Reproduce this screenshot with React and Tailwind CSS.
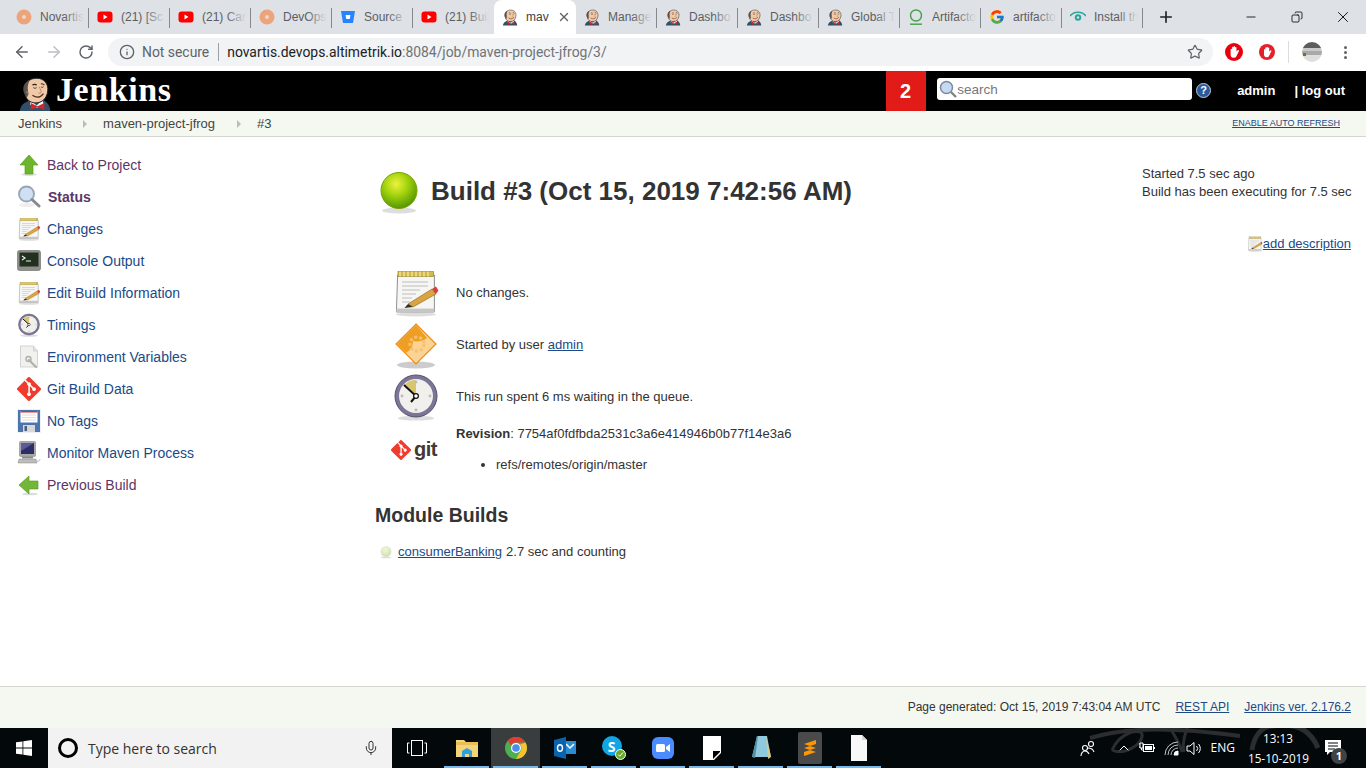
import { ArrowLeft, ArrowRight, RotateCw, Info, Star, Plus, Minus, X, Mic, ChevronUp, Copy } from 'lucide-react';
import { FcGoogle } from 'react-icons/fc';

const GIT_PATH = 'M90.156 41.965 50.036 1.848a5.918 5.918 0 0 0-8.372 0l-8.328 8.332 10.566 10.566a7.03 7.03 0 0 1 7.23 1.684 7.034 7.034 0 0 1 1.669 7.277l10.187 10.184a7.028 7.028 0 0 1 7.278 1.672 7.04 7.04 0 0 1 0 9.957 7.05 7.05 0 0 1-9.965 0 7.044 7.044 0 0 1-1.528-7.66l-9.5-9.497V59.36a7.04 7.04 0 0 1 1.86 11.29 7.04 7.04 0 0 1-9.957 0 7.04 7.04 0 0 1 0-9.958 7.06 7.06 0 0 1 2.304-1.539V33.926a7.049 7.049 0 0 1-3.82-9.234L29.242 14.272 1.73 41.777a5.925 5.925 0 0 0 0 8.371L41.852 90.27a5.925 5.925 0 0 0 8.37 0l39.934-39.934a5.925 5.925 0 0 0 0-8.371';

function JenkinsHead({ size = 16 }) {
    return (
        <svg width={size} height={size * 1.1} viewBox="0 0 40 44">
            <path d="M2 44C3 36 8 33 15 31l14-1c5 3 9 7 9 14z" fill="#2f5068" />
            <path d="M15 31l7 6 7-7 1 6-8 4-8-4z" fill="#f4f4f4" />
            <path d="M15 34l8 4 8-4v8l-8-3-8 3z" fill="#d3262a" />
            <path d="M8 22C6 10 14 5 22 5c9 0 14 7 13 15-1 9-7 14-14 14S9 30 8 22z" fill="#f0c9a8" stroke="#1c1c1c" strokeWidth="1.1" />
            <path d="M8 24C4 17 7 9 14 7c-3 5-3 10-2 15 0 3-1 5-2 6z" fill="#55524e" />
            <path d="M11 19c-2 0-2 4 1 5z" fill="#e4b693" stroke="#3a2a22" strokeWidth="0.6" />
            <path d="M17 13c1-1 4-1 5 0M27 12c1-1 3 0 4 1" stroke="#2c211b" strokeWidth="1.3" fill="none" />
            <path d="M18 16c1 1 3 1 4 0M27 15c1 1 2 1 3 0" stroke="#2c211b" strokeWidth="0.9" fill="none" />
            <path d="M25 15c1 3 3 5 2 7-1 1-3 1-3 0" stroke="#a8795a" strokeWidth="0.9" fill="none" />
            <path d="M17 25c4 3 9 3 13-2" stroke="#5a2c22" strokeWidth="1.4" fill="none" />
        </svg>
    );
}

function OrangeDot() {
    return (
        <svg width="16" height="16" viewBox="0 0 16 16">
            <circle cx="8" cy="8" r="7.5" fill="#eba47c" />
            <circle cx="8" cy="8" r="2" fill="#f6d3bd" />
        </svg>
    );
}

function YouTube() {
    return (
        <svg width="16" height="16" viewBox="0 0 16 16">
            <rect x="0.5" y="2.5" width="15" height="11" rx="3" fill="#f00" />
            <path d="M6.5 5.5l4 2.5-4 2.5z" fill="#fff" />
        </svg>
    );
}

function Bitbucket() {
    return (
        <svg width="16" height="16" viewBox="0 0 16 16">
            <path d="M1 2h14l-2 12H3z" fill="#2684ff" />
            <path d="M5.6 6h4.8l-.6 4H6.2z" fill="#fff" />
        </svg>
    );
}

function ArtifactoryIcon() {
    return (
        <svg width="16" height="18" viewBox="0 0 16 18">
            <circle cx="8" cy="7.5" r="5.5" fill="none" stroke="#43a047" strokeWidth="1.4" />
            <rect x="2" y="15.5" width="12" height="1.4" fill="#43a047" />
        </svg>
    );
}

function EyeIcon() {
    return (
        <svg width="16" height="16" viewBox="0 0 16 16">
            <path d="M0 7c4-5 12-5 16 0" fill="none" stroke="#26a69a" strokeWidth="1.5" />
            <circle cx="8" cy="8.5" r="3.2" fill="#26a69a" />
            <circle cx="8" cy="8.5" r="1.2" fill="#dee1e6" />
        </svg>
    );
}

const tabs = [
    { icon: <OrangeDot />, title: 'Novartis' },
    { icon: <YouTube />, title: '(21) [Sc' },
    { icon: <YouTube />, title: '(21) Car' },
    { icon: <OrangeDot />, title: 'DevOps' },
    { icon: <Bitbucket />, title: 'Source' },
    { icon: <YouTube />, title: '(21) Buil' },
    { icon: <JenkinsHead />, title: 'mav', active: true },
    { icon: <JenkinsHead />, title: 'Manage' },
    { icon: <JenkinsHead />, title: 'Dashbo' },
    { icon: <JenkinsHead />, title: 'Dashbo' },
    { icon: <JenkinsHead />, title: 'Global T' },
    { icon: <ArtifactoryIcon />, title: 'Artifacto' },
    { icon: <FcGoogle size={16} />, title: 'artifacto' },
    { icon: <EyeIcon />, title: 'Install th' },
];

function TabBar() {
    return (
        <div className="h-[34px] bg-[#dee1e6] flex items-end pl-2 shrink-0">
            {tabs.map((t, i) => (
                t.active ? (
                    <div key={i} className="w-[82px] h-[34px] bg-white rounded-t-lg flex items-center pl-2 pr-2 gap-2">
                        <span className="shrink-0 w-4 flex justify-center">{t.icon}</span>
                        <span className="text-xs text-[#3c4043] whitespace-nowrap">{t.title}</span>
                        <X size={14} strokeWidth={2.4} className="text-[#5f6368] ml-auto shrink-0" />
                    </div>
                ) : (
                    <div key={i} className="w-[81px] h-[34px] flex items-center pl-2 pr-[5px] gap-2 relative">
                        <span className="shrink-0 w-4 flex justify-center">{t.icon}</span>
                        <span className="text-xs text-[#5a5e63] whitespace-nowrap overflow-hidden flex-1">{t.title}</span>
                        <span className="absolute right-[5px] top-2 w-5 h-[18px] bg-gradient-to-r from-transparent to-[#dee1e6]" />
                        {i !== 5 && <span className="w-px h-5 bg-[#85888c] absolute right-0 top-2" />}
                    </div>
                )
            ))}
            <div className="w-[46px] h-[34px] flex items-center justify-center">
                <Plus size={18} strokeWidth={2.2} className="text-[#202124]" />
            </div>
            <div className="flex-1" />
            <div className="w-[46px] h-[34px] flex items-center justify-center"><Minus size={14} strokeWidth={1.4} className="text-black" /></div>
            <div className="w-[46px] h-[34px] flex items-center justify-center"><Copy size={12} strokeWidth={1.6} className="text-black -scale-x-100" /></div>
            <div className="w-[46px] h-[34px] flex items-center justify-center"><X size={18} strokeWidth={1.2} className="text-black" /></div>
        </div>
    );
}

// red blocker badge: ring, white hand with four fingers
function StopIcon({ size, ring }) {
    return (
        <svg width={size} height={size} viewBox="0 0 16 16">
            <circle cx="8" cy="8" r="8" fill={ring} />
            <path d="M5 8V5.500a.7.7 0 0 1 1.300 0V3.700a.7.7 0 0 1 1.300 0V3.200a.7.7 0 0 1 1.300 0v.8a.7.7 0 0 1 1.300 0v3.500l1-1a.7.7 0 0 1 1 1L9.800 12.500c-.4.500-1 .7-1.600.7H7.500C6 13.200 5 12 5 10.500z" fill="#fff" />
        </svg>
    );
}

function Avatar() {
    return (
        <svg width="20" height="20" viewBox="0 0 20 20">
            <clipPath id="avatarClip"><circle cx="10" cy="10" r="10" /></clipPath>
            <g clipPath="url(#avatarClip)">
                <rect width="20" height="6" fill="#5c5c5c" />
                <rect y="6" width="20" height="3" fill="#c9c9c9" />
                <rect y="9" width="20" height="4" fill="#a9a9a9" />
                <rect y="13" width="20" height="7" fill="#dedede" />
                <rect x="1" y="11" width="3" height="3" fill="#4d8a22" />
            </g>
        </svg>
    );
}

function Toolbar() {
    return (
        <div className="h-[36px] bg-white flex items-center shrink-0 font-['Roboto',sans-serif]">
            <div className="w-[44px] flex justify-center"><ArrowLeft size={18} strokeWidth={2} className="text-[#5f6368]" /></div>
            <div className="w-[20px] flex justify-center"><ArrowRight size={18} strokeWidth={2} className="text-[#bcbfc3]" /></div>
            <div className="w-[44px] flex justify-center"><RotateCw size={16} strokeWidth={2.2} className="text-[#5f6368]" /></div>
            <div className="w-[1105px] h-[28px] rounded-full bg-[#f1f3f4] flex items-center pl-[11px] pr-[10px]">
                <Info size={16} strokeWidth={2} className="text-[#5f6368]" />
                <span className="ml-[7px] text-[13.9px] text-[#5f6368]">Not secure</span>
                <span className="ml-[9px] w-px h-[18px] bg-[#9aa0a6]" />
                <span className="ml-[8px] text-[13.9px] text-[#202124] whitespace-nowrap">novartis.devops.altimetrik.io<span className="text-[#6f7377]">:8084/job/maven-project-jfrog/3/</span></span>
                <Star size={16} strokeWidth={1.8} className="text-[#5f6368] ml-auto" />
            </div>
            <div className="ml-[12px] w-[20px]"><StopIcon size={18} ring="#e8000f" /></div>
            <div className="ml-[14px] w-[16px]"><StopIcon size={16} ring="#e5202a" /></div>
            <div className="ml-[13px] w-px h-[22px] bg-[#dadce0]" />
            <div className="ml-[13px] w-5 h-5"><Avatar /></div>
            <div className="ml-[22px] flex flex-col gap-[2px]">
                <span className="w-[3px] h-[3px] rounded-full bg-[#5f6368]" />
                <span className="w-[3px] h-[3px] rounded-full bg-[#5f6368]" />
                <span className="w-[3px] h-[3px] rounded-full bg-[#5f6368]" />
            </div>
        </div>
    );
}

function MagnifierSmall() {
    return (
        <svg width="18" height="18" viewBox="0 0 18 18" className="shrink-0">
            <circle cx="7.5" cy="7.5" r="6" fill="#c5d9f1" stroke="#7c8aa0" strokeWidth="1.5" />
            <path d="M12 12l5 5" stroke="#7f7f7f" strokeWidth="2.2" />
        </svg>
    );
}

function JenkinsHeader() {
    return (
        <div className="h-[40px] bg-black flex items-stretch shrink-0 font-['Liberation_Sans',sans-serif] mt-px">
            <div className="ml-[18px] w-[36px] overflow-hidden flex items-end"><JenkinsHead size={34} /></div>
            <span className="ml-[2px] font-['Liberation_Serif',serif] font-bold text-[34px] text-white leading-[38px] tracking-[0.6px]">Jenkins</span>
            <div className="ml-auto w-[40px] bg-[#e11b17] flex items-center justify-center text-white text-xl font-bold pr-px">2</div>
            <div className="ml-[11px] self-center w-[255px] h-[22px] mt-[-4px] bg-white rounded-[3px] flex items-center pl-[2px]">
                <MagnifierSmall />
                <span className="text-[13.5px] text-[#777] mt-[2px]">search</span>
            </div>
            <div className="ml-[4px] self-center w-[15px] h-[15px] mt-[-1px] rounded-full bg-[#2a5a9c] border border-[#bcd] flex items-center justify-center text-white text-[11px] font-bold">?</div>
            <span className="ml-[26px] self-center text-[13px] font-bold text-white">admin</span>
            <span className="ml-[19px] self-center text-[13px] font-bold text-white">| log out</span>
            <div className="w-[21px]" />
        </div>
    );
}

function Caret() {
    return <span className="block w-0 h-0 border-y-[4px] border-y-transparent border-l-[4px] border-l-[#bbb]" />;
}

function Breadcrumb() {
    return (
        <div className="h-[26px] bg-[#f5f8f0] border-b border-[#d3d7cf] flex items-center pl-[18px] pr-[26px] text-[13px] text-[#444] shrink-0">
            <span>Jenkins</span>
            <span className="ml-[21px] mr-[16px]"><Caret /></span>
            <span>maven-project-jfrog</span>
            <span className="ml-[22px] mr-[16px]"><Caret /></span>
            <span>#3</span>
            <a className="ml-auto text-[9px] text-[#204a87] underline">ENABLE AUTO REFRESH</a>
        </div>
    );
}

function UpArrow() {
    return (
        <svg width="24" height="24" viewBox="0 0 24 24">
            <ellipse cx="12" cy="21.5" rx="8" ry="1.5" fill="#ddd" />
            <path d="M12 2l9 10h-5v9H8v-9H3z" fill="#6cb52d" stroke="#4e9a06" strokeWidth="0.6" />
        </svg>
    );
}

function LeftArrow() {
    return (
        <svg width="24" height="24" viewBox="0 0 24 24">
            <ellipse cx="13" cy="21" rx="8" ry="1.3" fill="#ddd" />
            <path d="M2 12l10-9v5h9v8h-9v5z" fill="#74b53c" stroke="#4e9a06" strokeWidth="0.6" />
        </svg>
    );
}

function BigMagnifier() {
    return (
        <svg width="24" height="24" viewBox="0 0 24 24">
            <ellipse cx="10" cy="20" rx="8" ry="2" fill="#eee" />
            <circle cx="9.5" cy="9" r="7.5" fill="#cfe0f5" stroke="#98a4b3" strokeWidth="1.8" />
            <path d="M15 14.5l7 6.5" stroke="#868a8f" strokeWidth="3" strokeLinecap="round" />
        </svg>
    );
}

function Notepad({ size = 24 }) {
    return (
        <svg width={size} height={size} viewBox="0 0 24 24">
            <ellipse cx="12" cy="22.7" rx="10" ry="1" fill="#ddd" />
            <path d="M2.8 3h18.400v18.500H2.200z" fill="#f6f6f4" stroke="#8f8f8f" strokeWidth="0.5" />
            <rect x="2.2" y="19.8" width="19" height="1.7" fill="#c6c6c4" />
            <rect x="3" y="1.3" width="17.8" height="2.5" fill="#d2b94a" stroke="#8f7a1e" strokeWidth="0.3" />
            <path d="M4 1.300v2.500M6 1.300v2.500M8 1.300v2.500M10 1.300v2.500M12 1.300v2.500M14 1.300v2.500M16 1.300v2.500M18 1.300v2.500" stroke="#fff4c0" strokeWidth="0.5" />
            <path d="M5 6.500h13M5 8.500h13M5 10.500h9M5 12.500h7M5 14.500h5M5 16.500h4" stroke="#bdbdbd" strokeWidth="0.5" />
            <path d="M8 17.500l12-7.500 2 2.500-11.500 6.500z" fill="#d9a441" stroke="#8a6416" strokeWidth="0.3" />
            <path d="M20 10l2-1.200 1.200 2-1.200 1.700z" fill="#d6403b" />
            <path d="M8 17.500l-1.800 2 4.300-.5z" fill="#33302a" />
        </svg>
    );
}

function Terminal() {
    return (
        <svg width="24" height="24" viewBox="0 0 24 24">
            <rect x="0.5" y="1.5" width="23" height="20" rx="2" fill="#8e9089" stroke="#666" strokeWidth="0.6" />
            <rect x="2.5" y="3.5" width="19" height="14" fill="#22301f" />
            <path d="M5 7l3 2-3 2M9 12h5" stroke="#e9f2e4" strokeWidth="1.2" fill="none" />
        </svg>
    );
}

function Clock({ size = 24 }) {
    return (
        <svg width={size} height={size} viewBox="0 0 24 24">
            <ellipse cx="12" cy="22.6" rx="9" ry="1.2" fill="#ddd" />
            <circle cx="12" cy="11.5" r="10.5" fill="#7b7596" stroke="#57516f" strokeWidth="0.5" />
            <circle cx="12" cy="11.5" r="8.5" fill="#f1f0ec" />
            <path d="M12 11.500V3.500a8 8 0 0 0-6 2.700z" fill="#d8c56f" />
            <path d="M6 6l6 5.500-2.500 3" stroke="#111" strokeWidth="1" fill="none" />
            <circle cx="12" cy="11.5" r="1.2" fill="#fff" stroke="#111" strokeWidth="0.6" />
            <circle cx="12" cy="4.5" r="0.7" fill="#bbb" /><circle cx="19" cy="11.5" r="0.7" fill="#bbb" />
            <circle cx="12" cy="18.5" r="0.7" fill="#bbb" /><circle cx="5" cy="11.5" r="0.7" fill="#bbb" />
        </svg>
    );
}

function EnvDoc() {
    return (
        <svg width="24" height="24" viewBox="0 0 24 24">
            <path d="M3.500 1h13l4 5v16h-17z" fill="#f1f1ef" stroke="#c4c4c2" strokeWidth="0.7" />
            <path d="M16.500 1v5h4" fill="#e0e0de" stroke="#c4c4c2" strokeWidth="0.6" />
            <path d="M12 15l7 7" stroke="#b0b0ae" strokeWidth="2.2" strokeLinecap="round" />
            <circle cx="11.5" cy="14" r="2.5" fill="none" stroke="#b0b0ae" strokeWidth="1.4" />
        </svg>
    );
}

function GitLogo({ size = 24 }) {
    return (
        <svg width={size} height={size} viewBox="0 0 92 92" className="shrink-0">
            <path d={GIT_PATH} fill="#f03c2e" />
        </svg>
    );
}

function Floppy() {
    return (
        <svg width="24" height="24" viewBox="0 0 24 24">
            <rect x="0" y="0" width="24" height="24" fill="#eef0f3" />
            <rect x="1" y="1" width="22" height="22" fill="#4d75ad" />
            <rect x="3.5" y="2" width="17" height="11.5" fill="#fff" />
            <rect x="3.5" y="2" width="17" height="1.5" fill="#d8352a" />
            <path d="M5 6h14M5 8.500h14M5 11h14" stroke="#c8c8c8" strokeWidth="0.6" />
            <rect x="6" y="16" width="12" height="7" fill="#d5d7db" />
            <rect x="7.5" y="17" width="2.5" height="5" fill="#4d5d78" />
        </svg>
    );
}

function Monitor() {
    return (
        <svg width="24" height="24" viewBox="0 0 24 24">
            <rect x="2.5" y="0.5" width="16" height="15" rx="1" fill="#a7a8a6" stroke="#7b7c7a" strokeWidth="0.5" />
            <rect x="4" y="2" width="13" height="11" fill="#2d2d68" />
            <path d="M4 2h13L4 10z" fill="#5a5a9c" />
            <rect x="5" y="15.5" width="11" height="2" fill="#8a8b89" />
            <path d="M2 18h17l1 4H1z" fill="#bcbdbb" stroke="#8a8b89" strokeWidth="0.5" />
            <path d="M20 20c2 1 3-1 3-2" stroke="#bbb" fill="none" />
        </svg>
    );
}

function GearDiamond() {
    return (
        <svg width="48" height="48" viewBox="0 0 48 48">
            <ellipse cx="24" cy="44" rx="19" ry="3.5" fill="#ccc" />
            <path d="M24 3l20 20-20 20L4 23z" fill="#fbd392" stroke="#f08c15" strokeWidth="1.2" />
            <path d="M24 4L5 23l9 9c5-3 7-7 7-12 5 1 10 0 14-3z" fill="#ee9f23" />
            <circle cx="25" cy="23" r="7" fill="none" stroke="#f6c06f" strokeWidth="3" strokeDasharray="3 2" />
        </svg>
    );
}

function Ball({ size, faded }) {
    const id = faded ? 'ballFaded' : 'ballGreen';
    return (
        <svg width={size} height={size} viewBox="0 0 48 48" className="shrink-0">
            <defs>
                <radialGradient id={id} cx="42%" cy="32%" r="70%">
                    <stop offset="0%" stopColor={faded ? '#f0f5d8' : '#eef23c'} />
                    <stop offset="45%" stopColor={faded ? '#e2edc4' : '#a4d40e'} />
                    <stop offset="100%" stopColor={faded ? '#cfdcb2' : '#4f9400'} />
                </radialGradient>
            </defs>
            <ellipse cx="24" cy="42.5" rx="17" ry="3" fill="#ddd" />
            <circle cx="24" cy="22.5" r="18" fill={`url(#${id})`} stroke={faded ? '#dfe8c8' : '#7aa400'} strokeWidth="1" />
        </svg>
    );
}

const sideItems = [
    { icon: <UpArrow />, label: 'Back to Project', color: 'text-[#5c3566]' },
    { icon: <BigMagnifier />, label: 'Status', color: 'text-[#5c3566] font-bold pl-px' },
    { icon: <Notepad />, label: 'Changes', color: 'text-[#204a87]' },
    { icon: <Terminal />, label: 'Console Output', color: 'text-[#204a87]' },
    { icon: <Notepad />, label: 'Edit Build Information', color: 'text-[#204a87]' },
    { icon: <Clock />, label: 'Timings', color: 'text-[#204a87]' },
    { icon: <EnvDoc />, label: 'Environment Variables', color: 'text-[#204a87]' },
    { icon: <GitLogo />, label: 'Git Build Data', color: 'text-[#204a87]' },
    { icon: <Floppy />, label: 'No Tags', color: 'text-[#204a87]' },
    { icon: <Monitor />, label: 'Monitor Maven Process', color: 'text-[#204a87]' },
    { icon: <LeftArrow />, label: 'Previous Build', color: 'text-[#5c3566]' },
];

function Sidebar() {
    return (
        <div className="w-[360px] shrink-0 pt-[12px] pl-[17px] flex flex-col">
            {sideItems.map(item => (
                <div key={item.label} className="h-[32px] flex items-center gap-[6px]">
                    <span className="w-[24px] h-[24px] shrink-0">{item.icon}</span>
                    <span className={`text-sm ${item.color}`}>{item.label}</span>
                </div>
            ))}
        </div>
    );
}

function Content() {
    return (
        <div className="flex-1 min-w-0 pl-[15px] pr-[15px] pt-[31px] text-[#333] text-[13px] leading-[16px]">
            <div className="flex">
                <div className="flex items-start gap-[8px]">
                    <Ball size={48} />
                    <h1 className="text-[26px] font-bold leading-[48px] mt-[-1px] whitespace-nowrap">Build #3 (Oct 15, 2019 7:42:56 AM)</h1>
                </div>
                <div className="ml-auto leading-[18px] w-[209px] mt-[-3px]">
                    <div>Started 7.5 sec ago</div>
                    <div className="whitespace-nowrap">Build has been executing for 7.5 sec</div>
                </div>
            </div>
            <div className="flex justify-end items-center mt-[19px] h-[18px]">
                <Notepad size={16} />
                <a className="text-[#204a87] underline">add description</a>
            </div>
            <div className="pl-[17px] mt-[14px] flex flex-col">
                <div className="h-[52px] flex items-center gap-[16px]">
                    <span className="w-[48px] h-[48px]"><Notepad size={48} /></span>
                    <span>No changes.</span>
                </div>
                <div className="h-[52px] flex items-center gap-[16px]">
                    <span className="w-[48px] h-[48px]"><GearDiamond /></span>
                    <span>Started by user <a className="text-[#204a87] underline">admin</a></span>
                </div>
                <div className="h-[52px] flex items-center gap-[16px]">
                    <span className="w-[48px] h-[48px]"><Clock size={48} /></span>
                    <span>This run spent 6 ms waiting in the queue.</span>
                </div>
                <div className="flex items-center gap-[16px]">
                    <div className="w-[48px] -ml-px mr-px flex items-center gap-[3px] mt-[3px]">
                        <GitLogo size={20} />
                        <span className="font-bold text-[20px] leading-[20px] text-[#413934] tracking-[-0.5px] -mt-[2px]">git</span>
                    </div>
                    <div className="pt-[3px]">
                        <div><b>Revision</b>: 7754af0fdfbda2531c3a6e414946b0b77f14e3a6</div>
                        <ul className="list-disc pl-[40px] mt-[15px]"><li>refs/remotes/origin/master</li></ul>
                    </div>
                </div>
            </div>
            <h2 className="text-[19.5px] font-bold mt-[28px] leading-[28px]">Module Builds</h2>
            <div className="flex items-center mt-[15px] pl-[4px]">
                <Ball size={14} faded />
                <a className="ml-[5px] text-[#204a87] underline">consumerBanking</a>
                <span className="ml-[4px]">2.7 sec and counting</span>
            </div>
        </div>
    );
}

function Footer() {
    return (
        <div className="h-[42px] bg-[#f5f8f0] border-t border-[#d3d7cf] flex items-center justify-end pr-[15px] pb-[2px] text-xs text-[#333] gap-[15px] shrink-0">
            <span>Page generated: Oct 15, 2019 7:43:04 AM UTC</span>
            <a className="text-[#204a87] underline">REST API</a>
            <a className="text-[#204a87] underline">Jenkins ver. 2.176.2</a>
        </div>
    );
}

function WinLogo() {
    return (
        <svg width="16" height="16" viewBox="0 0 16 16">
            <path d="M0 2.300l6.500-.9v6.200H0zM7.300 1.300L16 0v7.600H7.300zM0 8.400h6.500v6.200L0 13.700zM7.300 8.400H16V16l-8.700-1.200z" fill="#fff" />
        </svg>
    );
}

function Explorer() {
    return (
        <svg width="22" height="22" viewBox="0 0 22 22">
            <path d="M0 3h8l2 2h12v15H0z" fill="#f4d479" />
            <rect x="0" y="5" width="22" height="3" fill="#e9bf55" />
            <path d="M6 20v-6l5-3 5 3v6h-3v-3H9v3z" fill="#2f9fe0" />
        </svg>
    );
}

function Chrome() {
    return (
        <svg width="22" height="22" viewBox="0 0 22 22">
            <circle cx="11" cy="11" r="11" fill="#4caf50" />
            <path d="M11 0a11 11 0 0 1 9.500 5.500H11a5.500 5.500 0 0 0-5 3L2.800 3.700A11 11 0 0 1 11 0z" fill="#e53935" />
            <path d="M20.500 5.500A11 11 0 0 1 11 22l4.800-8.300A5.500 5.500 0 0 0 15 7.500z" fill="#fbc02d" />
            <circle cx="11" cy="11" r="5" fill="#fff" />
            <circle cx="11" cy="11" r="3.8" fill="#4d8bf0" />
        </svg>
    );
}

function Outlook() {
    return (
        <svg width="22" height="22" viewBox="0 0 22 22">
            <rect x="9" y="4" width="13" height="13" fill="#2a8dd4" />
            <path d="M12 7l4 4 4-4" stroke="#fff" strokeWidth="1.5" fill="none" />
            <path d="M0 3l12-3v22L0 19z" fill="#0a64ad" />
            <ellipse cx="6" cy="11" rx="2.5" ry="3.2" fill="none" stroke="#fff" strokeWidth="1.4" />
        </svg>
    );
}

function Skype() {
    return (
        <div className="relative w-[24px] h-[24px]">
            <div className="w-[20px] h-[20px] rounded-full bg-[#12a5e6] flex items-center justify-center text-white font-bold text-[14px]">S</div>
            <div className="absolute right-0 bottom-0 w-[11px] h-[11px] rounded-full bg-[#6ba72c] border border-white flex items-center justify-center">
                <svg width="7" height="7" viewBox="0 0 7 7"><path d="M1 3.500l1.700 1.700L6 1.500" stroke="#fff" fill="none" /></svg>
            </div>
        </div>
    );
}

function Zoom() {
    return (
        <svg width="22" height="22" viewBox="0 0 22 22">
            <rect width="22" height="22" rx="6" fill="#4a8cff" />
            <rect x="4" y="7" width="9" height="8" rx="1.5" fill="#fff" />
            <path d="M14 10l4-3v8l-4-3z" fill="#fff" />
        </svg>
    );
}

function Sublime() {
    return (
        <div className="w-[24px] h-[32px] bg-[#4a4a4a] rounded-[2px] flex items-center justify-center">
            <svg width="14" height="18" viewBox="0 0 14 18">
                <path d="M1 5l12-4v4L1 9zM1 9l12 4v-4L1 5zM1 13l12-4v4L1 17z" fill="#ff9800" />
            </svg>
        </div>
    );
}

function Sticky() {
    return (
        <svg width="18" height="24" viewBox="0 0 18 24">
            <path d="M0 0h18v17l-7 7H0z" fill="#fff" />
            <path d="M10 23l7-7v-1H10z" fill="#000" />
        </svg>
    );
}

function Notepad3D() {
    return (
        <svg width="22" height="26" viewBox="0 0 22 26">
            <path d="M7 1h10l4 21H2z" fill="#8ec9dd" />
            <path d="M2 22l5-21 1 0-3 22z" fill="#4d8fa5" />
            <path d="M16 1l5 21-3 2z" fill="#d8c98a" />
        </svg>
    );
}

function BlankFile() {
    return (
        <svg width="16" height="26" viewBox="0 0 16 26">
            <path d="M0 0h11l5 5v21H0z" fill="#f8f8f8" />
            <path d="M11 0v5h5" fill="#d5d5d5" />
        </svg>
    );
}

const taskApps = [
    { icon: <Explorer /> },
    { icon: <Chrome />, current: true },
    { icon: <Outlook /> },
    { icon: <Skype /> },
    { icon: <Zoom /> },
    { icon: <Sticky /> },
    { icon: <Notepad3D /> },
    { icon: <Sublime /> },
    { icon: <BlankFile /> },
];

function Taskbar() {
    return (
        <div className="h-[40px] bg-[#03080a] flex items-stretch shrink-0 relative text-white font-['Open_Sans',sans-serif]">
            <svg className="absolute left-[1070px] top-0" width="296" height="40" viewBox="0 0 296 40" fill="none" stroke="#2b2d2e">
                <path d="M20 10C60 -2 110 0 170 8" strokeWidth="4" />
                <path d="M42 22C50 4 70 0 72 6c2 10-18 22-30 16" strokeWidth="3" />
                <path d="M100 0c6 10 10 16 12 24M118 -2c-4 10-6 18-4 26" strokeWidth="3" />
                <path d="M182 22c2-14 10-24 20-24 30-4 40 8 46 22" strokeWidth="5" />
            </svg>
            <div className="w-[48px] flex items-center justify-center"><WinLogo /></div>
            <div className="w-[344px] bg-[#f2f2f2] flex items-center pl-[10px] pr-[13px]">
                <span className="w-[20px] h-[20px] rounded-full border-[3px] border-black" />
                <span className="ml-[10px] text-[14px] text-[#333]">Type here to search</span>
                <Mic size={16} strokeWidth={1.5} className="text-[#333] ml-auto" />
            </div>
            <div className="w-[49px] flex items-center justify-center">
                <svg width="20" height="16" viewBox="0 0 20 16" fill="none" stroke="#fff"><rect x="4.5" y="0.5" width="11" height="15" /><path d="M2.500 3H.5v10h2M17.500 3h2v10h-2" /></svg>
            </div>
            <div className="w-px" />
            {taskApps.map((a, i) => (
                <div key={i} className={`w-[49px] flex items-center justify-center relative ${a.current ? 'bg-[#3a3d3e]' : ''}`}>
                    {a.icon}
                    <span className="absolute bottom-0 left-[2px] right-[2px] h-[2px] bg-[#76b9ed]" />
                </div>
            ))}
            <div className="ml-auto flex items-center relative text-xs">
                <svg width="18" height="18" viewBox="0 0 18 18" fill="none" stroke="#fff" strokeWidth="1.1"><circle cx="6" cy="9" r="2.5" /><circle cx="12" cy="5" r="2.5" /><path d="M2 17c0-3 2-5 4-5s3 1 4 3M9 9c2 0 5 1 6 4" /></svg>
                <ChevronUp size={16} strokeWidth={1.5} className="ml-[19px]" />
                <svg className="ml-[7px]" width="16" height="12" viewBox="0 0 16 12" fill="none" stroke="#fff"><path d="M0 2h1M0 5h1M1 1h3v5H1zM2.500 6v2h2" /><rect x="4.5" y="2.5" width="10" height="7" /><rect x="6" y="4" width="7" height="4" fill="#fff" stroke="none" /><path d="M15.500 5v2" /></svg>
                <svg className="ml-[9px]" width="15" height="15" viewBox="0 0 15 15" fill="none" stroke="#c4c6c6"><path d="M1 14A13 13 0 0 1 14 1M4 14A10 10 0 0 1 14 4M7 14a7 7 0 0 1 7-7" /><path d="M10 14a4 4 0 0 1 4-4v4z" fill="#fff" stroke="#fff" /></svg>
                <svg className="ml-[7px]" width="16" height="15" viewBox="0 0 16 15" fill="none" stroke="#fff"><path d="M1 5h3l4-3.500v12L4 10H1zM10.500 5a3.500 3.500 0 0 1 0 5M12.500 3a6.500 6.500 0 0 1 0 9" /></svg>
                <span className="ml-[9px] text-[12px]">ENG</span>
                <div className="ml-[13px] w-[60px] text-center text-[11.7px] leading-[20px] whitespace-nowrap">
                    <div>13:13</div>
                    <div>15-10-2019</div>
                </div>
                <div className="ml-[17px] mr-[25px] relative w-[16px] h-[16px]">
                    <svg width="16" height="15" viewBox="0 0 16 15"><path d="M0 0h16v12H5l-3 3v-3H0z" fill="#fff" /><path d="M3 3h10M3 6h10M3 9h7" stroke="#03080a" /></svg>
                    <span className="absolute -right-[6px] -bottom-[8px] w-[16px] h-[16px] rounded-full bg-[#3f4345] text-white text-[11px] font-bold leading-[16px] text-center">1</span>
                </div>
            </div>
        </div>
    );
}

export default function App() {
    return (
        <div className="w-[1366px] h-[768px] overflow-hidden flex flex-col bg-white font-['Liberation_Sans',sans-serif]">
            <TabBar />
            <Toolbar />
            <JenkinsHeader />
            <Breadcrumb />
            <div className="flex-1 min-h-0 flex">
                <Sidebar />
                <Content />
            </div>
            <Footer />
            <Taskbar />
        </div>
    );
}
